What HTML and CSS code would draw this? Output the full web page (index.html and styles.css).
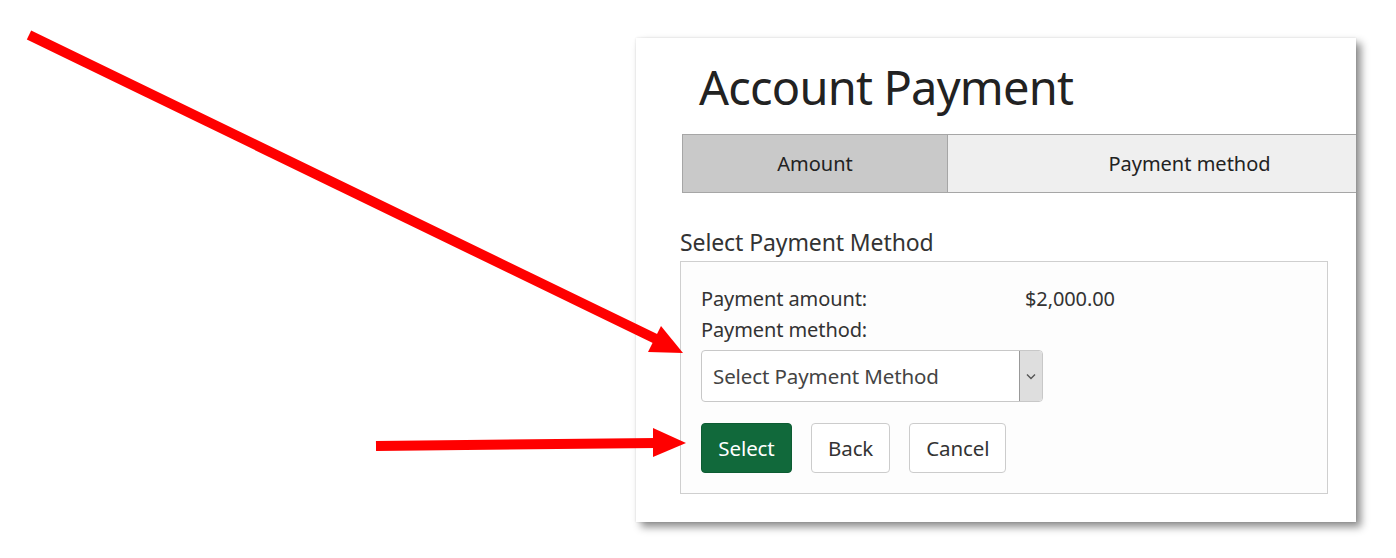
FILE: index.html
```html
<!DOCTYPE html>
<html lang="en">
<head>
    <meta charset="UTF-8">
    <meta name="viewport" content="width=device-width, initial-scale=1.0">
    <title>Account Payment</title>
    <link rel="stylesheet" href="styles.css">
</head>
<body>
    <div class="stage">
        <div class="card">
            <h1 class="title">Account Payment</h1>

            <div class="steps">
                <div class="step active">Amount</div>
                <div class="step">Payment method</div>
            </div>

            <div class="group-label">Select Payment Method</div>
            <div class="group">
                <div class="row">
                    <span class="row-label">Payment amount:</span>
                    <span class="row-value">$2,000.00</span>
                </div>
                <div class="row">
                    <span class="row-label">Payment method:</span>
                </div>
                <div class="select">
                    <span class="select-text">Select Payment Method</span>
                    <span class="select-btn">
                        <svg width="10" height="7" viewBox="0 0 10 7"><path d="M1 1.5 L5 5.5 L9 1.5" fill="none" stroke="#555" stroke-width="1.4"/></svg>
                    </span>
                </div>
                <div class="actions">
                    <button class="btn btn-primary">Select</button>
                    <button class="btn">Back</button>
                    <button class="btn">Cancel</button>
                </div>
            </div>
        </div>
    </div>

    <!-- annotation arrows drawn over the screenshot -->
    <svg class="arrows" width="1396" height="558" viewBox="0 0 1396 558">
        <line x1="29" y1="35" x2="656" y2="339" stroke="#ff0000" stroke-width="10"/>
        <polygon points="648,352 661,326 683,353" fill="#ff0000"/>
        <line x1="376" y1="446" x2="656" y2="443" stroke="#ff0000" stroke-width="10"/>
        <polygon points="653,428 653,457 686,443" fill="#ff0000"/>
    </svg>
</body>
</html>
```

FILE: styles.css
```css
* {
    margin: 0;
    padding: 0;
    box-sizing: border-box;
}
body {
    font-family: 'Noto Sans', 'Open Sans', sans-serif;
    background: #fff;
    color: #222;
    width: 1396px;
    height: 558px;
    overflow: hidden;
    position: relative;
}
.stage {
    padding: 38px 0 0 636px;
}
.card {
    width: 720px;
    height: 484px;
    background: #fff;
    overflow: hidden;
    padding: 21px 0 0 44px;
    box-shadow: 5px 5px 8px rgba(0,0,0,0.45), 0 0 2px rgba(0,0,0,0.12);
}
.title {
    font-size: 47px;
    font-weight: 400;
    line-height: 56px;
    color: #222;
    padding-left: 19px;
    letter-spacing: -0.8px;
}
.steps {
    display: flex;
    width: 750px;
    margin: 19px 0 0 2px;
}
.step {
    height: 59px;
    display: flex;
    align-items: center;
    justify-content: center;
    font-size: 20px;
    color: #222;
    background: #efefef;
    border: 1px solid #a6a6a6;
    border-left: none;
    width: 484px;
}
.step.active {
    width: 266px;
    background: #c9c9c9;
    border-left: 1px solid #a6a6a6;
}
.group-label {
    font-size: 23px;
    line-height: 30px;
    color: #333;
    margin-top: 34px;
    letter-spacing: -0.1px;
}
.group {
    width: 648px;
    margin-top: 4px;
    border: 1px solid #cfcfcf;
    background: #fdfdfd;
    padding: 21px 20px 20px 20px;
}
.row {
    display: flex;
    font-size: 20px;
    line-height: 31px;
    color: #333;
    letter-spacing: -0.1px;
}
.row-label {
    width: 324px;
}
.select {
    display: flex;
    width: 342px;
    height: 52px;
    margin-top: 5px;
    border: 1px solid #c8c8c8;
    border-radius: 4px;
    background: #fff;
    overflow: hidden;
}
.select-text {
    flex: 1;
    display: flex;
    align-items: center;
    padding-left: 11px;
    font-size: 20.5px;
    color: #444;
    letter-spacing: -0.1px;
}
.select-btn {
    width: 23px;
    display: flex;
    align-items: center;
    justify-content: center;
    background: #dedede;
    border-left: 1px solid #999;
    border-radius: 0 3px 3px 0;
}
.actions {
    display: flex;
    gap: 19px;
    margin-top: 21px;
}
.btn {
    height: 50px;
    padding: 0 16px;
    font-family: inherit;
    font-size: 20.5px;
    color: #333;
    background: #fff;
    border: 1px solid #ccc;
    border-radius: 4px;
    letter-spacing: -0.1px;
}
.btn-primary {
    background: #11693b;
    border-color: #0d5c33;
    color: #fff;
    width: 91px;
}
.arrows {
    position: absolute;
    left: 0;
    top: 0;
    pointer-events: none;
}
```
